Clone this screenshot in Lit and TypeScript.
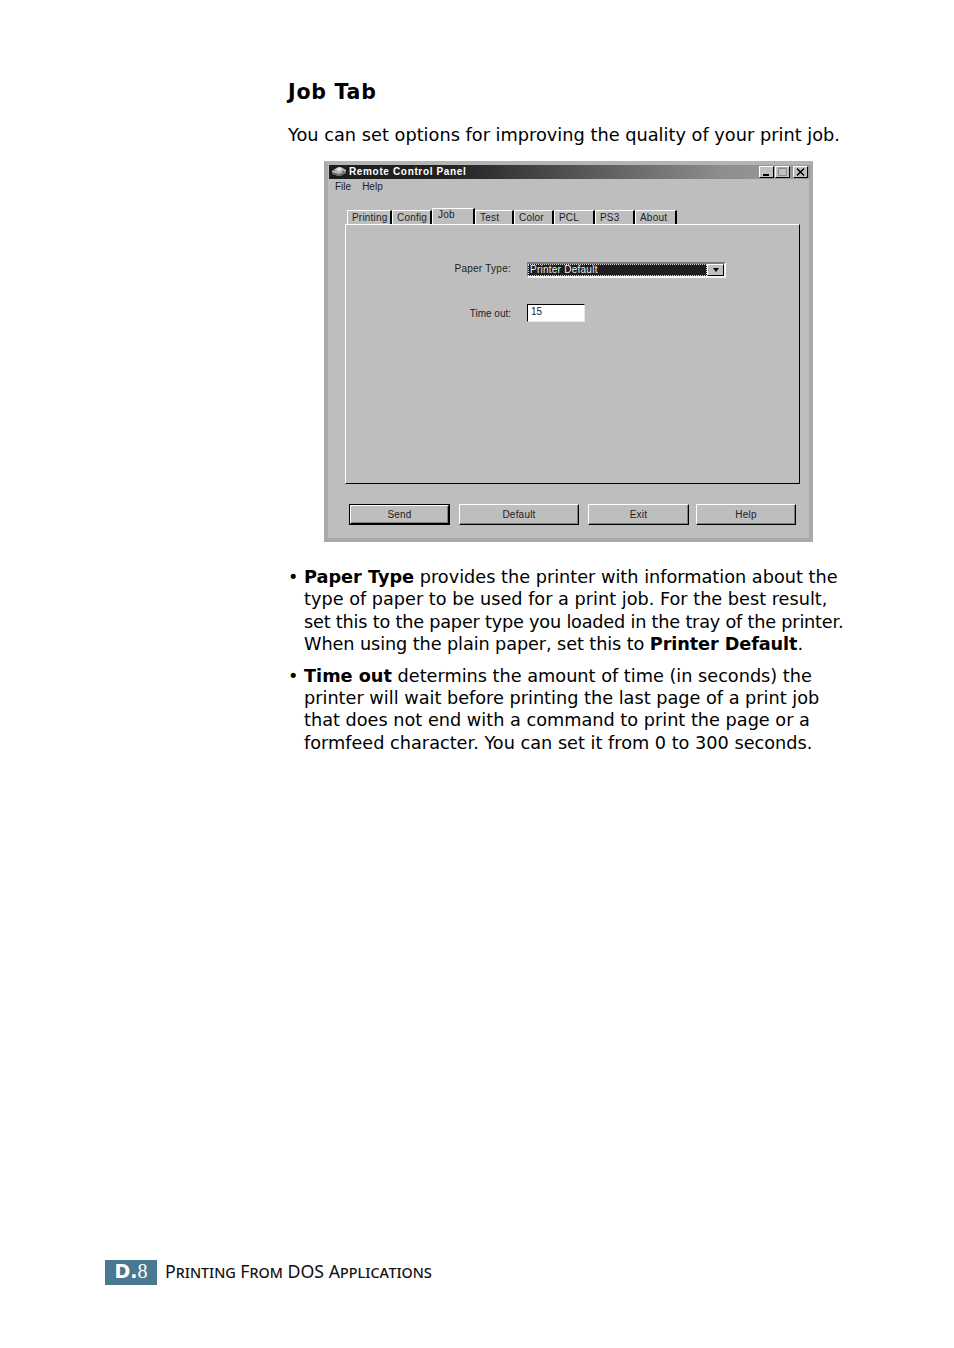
import { LitElement, html, css } from "lit";
import { customElement } from "lit/decorators.js";

const tabs = [
  ["Printing", 45], ["Config", 40], ["Job", 43], ["Test", 39], ["Color", 40], ["PCL", 41], ["PS3", 40], ["About", 42],
] as const;
const buttons = [["Send", 101, true], ["Default", 120, false], ["Exit", 101, false], ["Help", 100, false]] as const;

@customElement("app-root")
export class AppRoot extends LitElement {
  static styles = css`
    :host { display: block; width: 954px; height: 1348px; background: #fff; color: #000; font-family: "DejaVu Sans", Verdana, sans-serif; }
    .page { height: 1348px; box-sizing: border-box; display: flex; flex-direction: column; padding: 79px 0 63px; }
    .main { margin-left: 288px; width: 600px; }
    h1 { margin: 0; font-size: 20.5px; line-height: 26px; font-weight: 700; letter-spacing: .75px; }
    .intro { margin: 19px 0 0; font-size: 17.75px; line-height: 22px; white-space: nowrap; }
    .win { margin: 15px 0 0 36px; width: 489px; height: 381px; box-sizing: border-box; border: 4px solid #a9a9a9; border-top-color: #b4b4b4; background: #bebebe; font-family: "Liberation Sans", Arial, sans-serif; font-size: 10px; color: #222; display: flex; flex-direction: column; }
    .title { margin: 0 0 0 1px; width: 481px; height: 14px; box-sizing: border-box; background: linear-gradient(90deg, #1c1c1c 0, #222 25%, #8e8e8e 82%, #9a9a9a 100%); color: #fff; display: flex; align-items: center; padding: 0 2px 1px; font-weight: 700; font-size: 10px; letter-spacing: .65px; }
    .title svg { width: 16px; height: 11px; margin-right: 2px; flex: none; }
    .title span { flex: 1; }
    .ctl { width: 15px; height: 12px; box-sizing: border-box; background: #c0c0c0; border: 1px solid; border-color: #fff #000 #000 #fff; margin-left: 1px; display: block; flex: none; }
    .ctl svg { width: 13px; height: 10px; margin: 0; display: block; }
    .ctl.max { margin-left: 1px; margin-right: 2px; }
    .menu { display: flex; gap: 11px; padding: 2px 0 0 7px; height: 14px; box-sizing: border-box; line-height: 12px; }
    .tabs { display: flex; margin: 15px 0 0 19px; height: 16px; align-items: flex-end; }
    .tab { height: 14px; box-sizing: border-box; flex: none; border-top: 1px solid #fff; border-left: 1px solid #fff; border-right: 2px solid #000; padding-left: 4px; line-height: 13px; letter-spacing: .2px; }
    .tab.on { height: 16px; line-height: 12px; padding-left: 5px; }
    .panel { margin: 0 0 0 17px; width: 455px; height: 260px; box-sizing: border-box; border: 1.5px solid; border-color: #fff #000 #000 #fff; display: grid; grid-template-columns: 165px 1fr; grid-template-rows: 37px 16px 25.5px 18px; column-gap: 16px; align-items: center; align-content: start; }
    .lbl { text-align: right; letter-spacing: .25px; }
    .l1 { grid-row: 2; margin-bottom: 4px; }
    .sel { grid-row: 2; width: 199px; height: 16px; box-sizing: border-box; border: 1px solid; border-color: #7c7c7c #f4f4f4 #f4f4f4 #7c7c7c; border-width: 2px 2px 2px 1px; display: flex; background: #222; }
    .val { flex: 1; background: #1e1e1e; color: #eee; outline: 1px dotted #ddd; outline-offset: -1px; line-height: 12px; padding-left: 2px; letter-spacing: .25px; }
    .arrow { width: 17px; background: #c0c0c0; border: 1px solid; border-color: #fff #000 #000 #fff; box-sizing: border-box; display: flex; align-items: center; justify-content: center; }
    .arrow::before { content: ""; border: 3.5px solid transparent; border-top: 4px solid #000; border-bottom: 0; }
    .l2 { grid-row: 4; margin-top: 1px; letter-spacing: 0; }
    .inp { grid-row: 4; width: 58px; height: 18px; box-sizing: border-box; background: #fff; border: 1px solid; border-color: #000 #e8e8e8 #e8e8e8 #000; line-height: 13px; padding-left: 3px; }
    .btns { display: flex; margin: 20px 0 0 21px; gap: 9px; }
    .btn { height: 21px; box-sizing: border-box; border: 1px solid; border-color: #fff #000 #000 #fff; box-shadow: inset -1px -1px 0 #808080; text-align: center; line-height: 20px; flex: none; letter-spacing: .2px; }
    .btn.def { outline: 1px solid #000; outline-offset: -1px; border-width: 2px; line-height: 18px; }
    .btn.last { margin-left: -2px; }
    ul { list-style: none; margin: 24px 0 0; padding: 0; font-size: 17.7px; line-height: 22.4px; }
    li { position: relative; padding-left: 16px; margin-bottom: 9px; white-space: nowrap; }
    li::before { content: "•"; position: absolute; left: 0; }
    .ln { display: block; }
    .t3 { letter-spacing: -0.21px; }
    .t4 { letter-spacing: -0.1px; }
    .foot { margin-top: auto; margin-left: 105px; display: flex; align-items: center; gap: 8px; }
    .badge { width: 52px; height: 25px; background: #4a7791; color: #fff; text-align: center; font-size: 19px; line-height: 22px; flex: none; }
    .badge b { font-weight: 700; }
    .badge span { font-family: "Liberation Serif", serif; font-weight: 400; font-size: 20px; }
    .ft { font-family: "Noto Sans", sans-serif; font-size: 17.75px; line-height: 23px; padding-bottom: 2px; font-variant: small-caps; color: #111; }
  `;

  render() {
    return html`<div class="page">
      <div class="main">
        <h1>Job Tab</h1>
        <p class="intro">You can set options for improving the quality of your print job.</p>
        <div class="win">
          <div class="title">
            <svg viewBox="0 0 16 11"><path d="M1 5 7 1h3l5 3v3l-6 3H7L1 7z" fill="#b8b8b8"/><path d="M1 6l7 2 7-3v2l-6 3H7L1 8z" fill="#6a6a6a"/><path d="M5 3l3-1 3 1-3 2z" fill="#eee"/><path d="M3 5l1-1M11 6l2-1" stroke="#555" fill="none"/></svg>
            <span>Remote Control Panel</span>
            <div class="ctl"><svg viewBox="0 0 13 10"><rect x="3" y="7" width="6" height="2" fill="#000"/></svg></div>
            <div class="ctl max"><svg viewBox="0 0 13 10"><path d="M2.5 1.5h8v7h-8zM2 1h9" fill="none" stroke="#888"/></svg></div>
            <div class="ctl"><svg viewBox="0 0 13 10"><path d="M3 1.500l7 7M10 1.500l-7 7" fill="none" stroke="#000" stroke-width="1.500"/></svg></div>
          </div>
          <div class="menu"><span>File</span><span>Help</span></div>
          <div class="tabs">
            ${tabs.map(([t, w]) => html`<div class="tab ${t === "Job" ? "on" : ""}" style="width:${w}px">${t}</div>`)}
          </div>
          <div class="panel">
            <div class="lbl l1">Paper Type:</div>
            <div class="sel"><div class="val">Printer Default</div><div class="arrow"></div></div>
            <div class="lbl l2">Time out:</div>
            <div class="inp">15</div>
          </div>
          <div class="btns">
            ${buttons.map(([t, w, d]) => html`<div class="btn ${d ? "def" : ""} ${t === "Help" ? "last" : ""}" style="width:${w}px">${t}</div>`)}
          </div>
        </div>
        <ul>
          <li><span class="ln"><b>Paper Type</b> provides the printer with information about the</span><span class="ln">type of paper to be used for a print job. For the best result,</span><span class="ln t3">set this to the paper type you loaded in the tray of the printer.</span><span class="ln t4">When using the plain paper, set this to <b>Printer Default</b>.</span></li>
          <li><span class="ln"><b>Time out</b> determins the amount of time (in seconds) the</span><span class="ln">printer will wait before printing the last page of a print job</span><span class="ln">that does not end with a command to print the page or a</span><span class="ln">formfeed character. You can set it from 0 to 300 seconds.</span></li>
        </ul>
      </div>
      <div class="foot">
        <div class="badge"><b>D.</b><span>8</span></div>
        <div class="ft">Printing From DOS Applications</div>
      </div>
    </div>`;
  }
}
